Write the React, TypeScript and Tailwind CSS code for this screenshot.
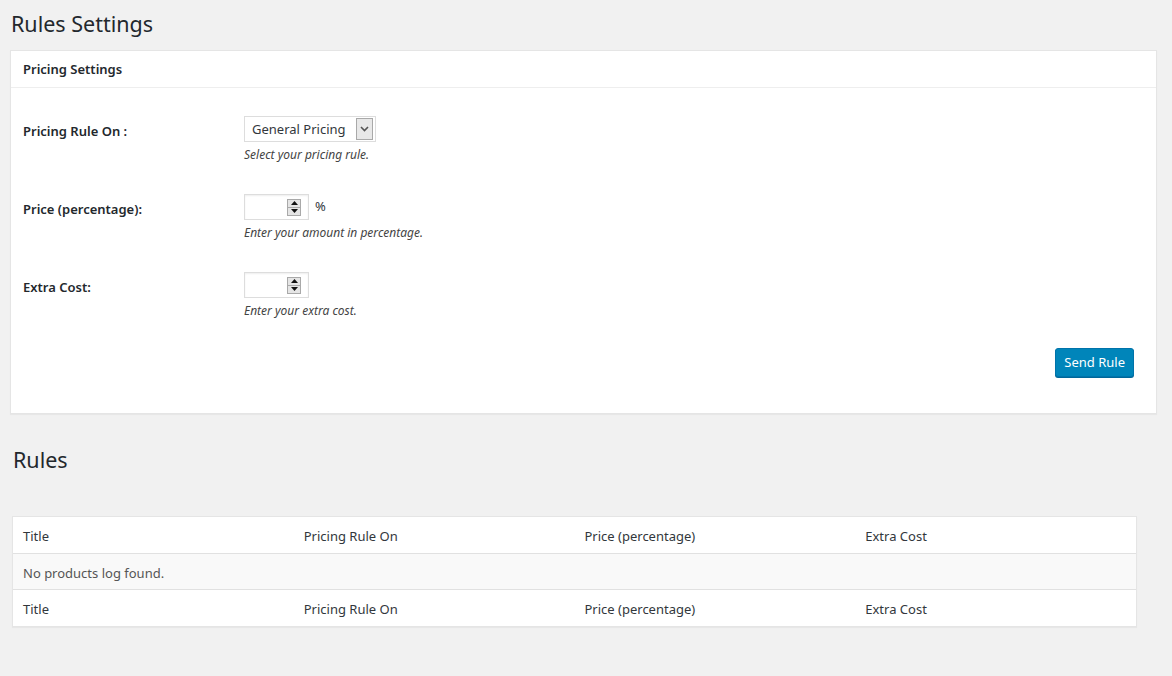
import React from "react";

const font = { fontFamily: '"Noto Sans", "Open Sans", sans-serif' };

function Spinner() {
  return (
    <div className="flex h-[17px] w-[14px] flex-col border border-[#a9a9a9] bg-[#e5e5e5]">
      <div className="flex flex-1 items-center justify-center border-b border-[#a9a9a9]">
        <svg width="7" height="4" viewBox="0 0 7 4">
          <path d="M0 4 L3.5 0 L7 4 Z" fill="#111" />
        </svg>
      </div>
      <div className="flex flex-1 items-center justify-center">
        <svg width="7" height="4" viewBox="0 0 7 4">
          <path d="M0 0 L3.5 4 L7 0 Z" fill="#111" />
        </svg>
      </div>
    </div>
  );
}

function NumberBox() {
  return (
    <div className="flex h-[26px] w-[65px] items-center justify-end border border-[#ddd] bg-white pr-[7px] shadow-[inset_0_1px_2px_rgba(0,0,0,0.07)]">
      <Spinner />
    </div>
  );
}

function Row({ label, desc, children }: { label: string; desc: string; children: React.ReactNode }) {
  return (
    <div className="flex">
      <div className="w-[221px] pt-[6px] text-[13px] font-semibold text-[#23282d]">{label}</div>
      <div className="flex flex-col">
        {children}
        <p className="mt-[4px] text-[12px] italic text-[#444]">{desc}</p>
      </div>
    </div>
  );
}

const cols = ["Title", "Pricing Rule On", "Price (percentage)", "Extra Cost"];

export default function App() {
  return (
    <main className="min-h-screen bg-[#f1f1f1] pl-[10px] pr-[15px]" style={font}>
      <h1 className="pl-[1px] pt-[9px] text-[21.5px] leading-[29px] text-[#23282d]">Rules Settings</h1>

      <div className="mt-[12px] border border-[#e5e5e5] bg-white shadow-[0_1px_1px_rgba(0,0,0,0.04)]">
        <div className="border-b border-[#eee] px-[12px] py-[10px] text-[13px] font-semibold leading-[16px] text-[#23282d]">
          Pricing Settings
        </div>
        <div className="flex flex-col gap-[30px] px-[12px] pt-[28px]">
          <Row label="Pricing Rule On :" desc="Select your pricing rule.">
            <div className="flex h-[26px] w-[132px] items-center justify-between border border-[#ddd] bg-white pl-[7px] pr-[2px] text-[13px] text-[#32373c]">
              <span className="pt-[2px]">General Pricing</span>
              <div className="flex h-[22px] w-[17px] items-center justify-center border border-[#a9a9a9] bg-[#e8e8e8]">
                <svg width="9" height="6" viewBox="0 0 9 6">
                  <path d="M1 1 L4.5 4.5 L8 1" stroke="#555" strokeWidth="1.6" fill="none" />
                </svg>
              </div>
            </div>
          </Row>
          <Row label="Price (percentage):" desc="Enter your amount in percentage.">
            <div className="flex items-center gap-[6px]">
              <NumberBox />
              <span className="text-[13px] text-[#32373c]">%</span>
            </div>
          </Row>
          <Row label="Extra Cost:" desc="Enter your extra cost.">
            <NumberBox />
          </Row>
        </div>
        <div className="flex justify-end pb-[36px] pr-[22px] pt-[28px]">
          <button className="h-[29px] rounded-[3px] border border-[#0073aa] bg-[#0085ba] px-[8px] text-[13px] text-white shadow-[0_1px_0_#006799]">
            Send Rule
          </button>
        </div>
      </div>

      <h2 className="ml-[3px] mt-[31px] text-[21.5px] leading-[29px] text-[#23282d]">Rules</h2>

      <div className="ml-[2px] mr-[20px] mt-[42px] border border-[#e5e5e5] bg-white text-[13px] text-[#32373c] shadow-[0_1px_1px_rgba(0,0,0,0.04)]">
        <div className="grid grid-cols-4 border-b border-[#e1e1e1]">
          {cols.map((c) => (
            <div key={c} className="px-[10px] pb-[8px] pt-[10px] leading-[18px]">{c}</div>
          ))}
        </div>
        <div className="bg-[#f9f9f9] px-[10px] pb-[7px] pt-[10px] leading-[18px] text-[#555]">No products log found.</div>
        <div className="grid grid-cols-4 border-t border-[#e1e1e1]">
          {cols.map((c) => (
            <div key={c} className="px-[10px] pb-[8px] pt-[10px] leading-[18px]">{c}</div>
          ))}
        </div>
      </div>
    </main>
  );
}
